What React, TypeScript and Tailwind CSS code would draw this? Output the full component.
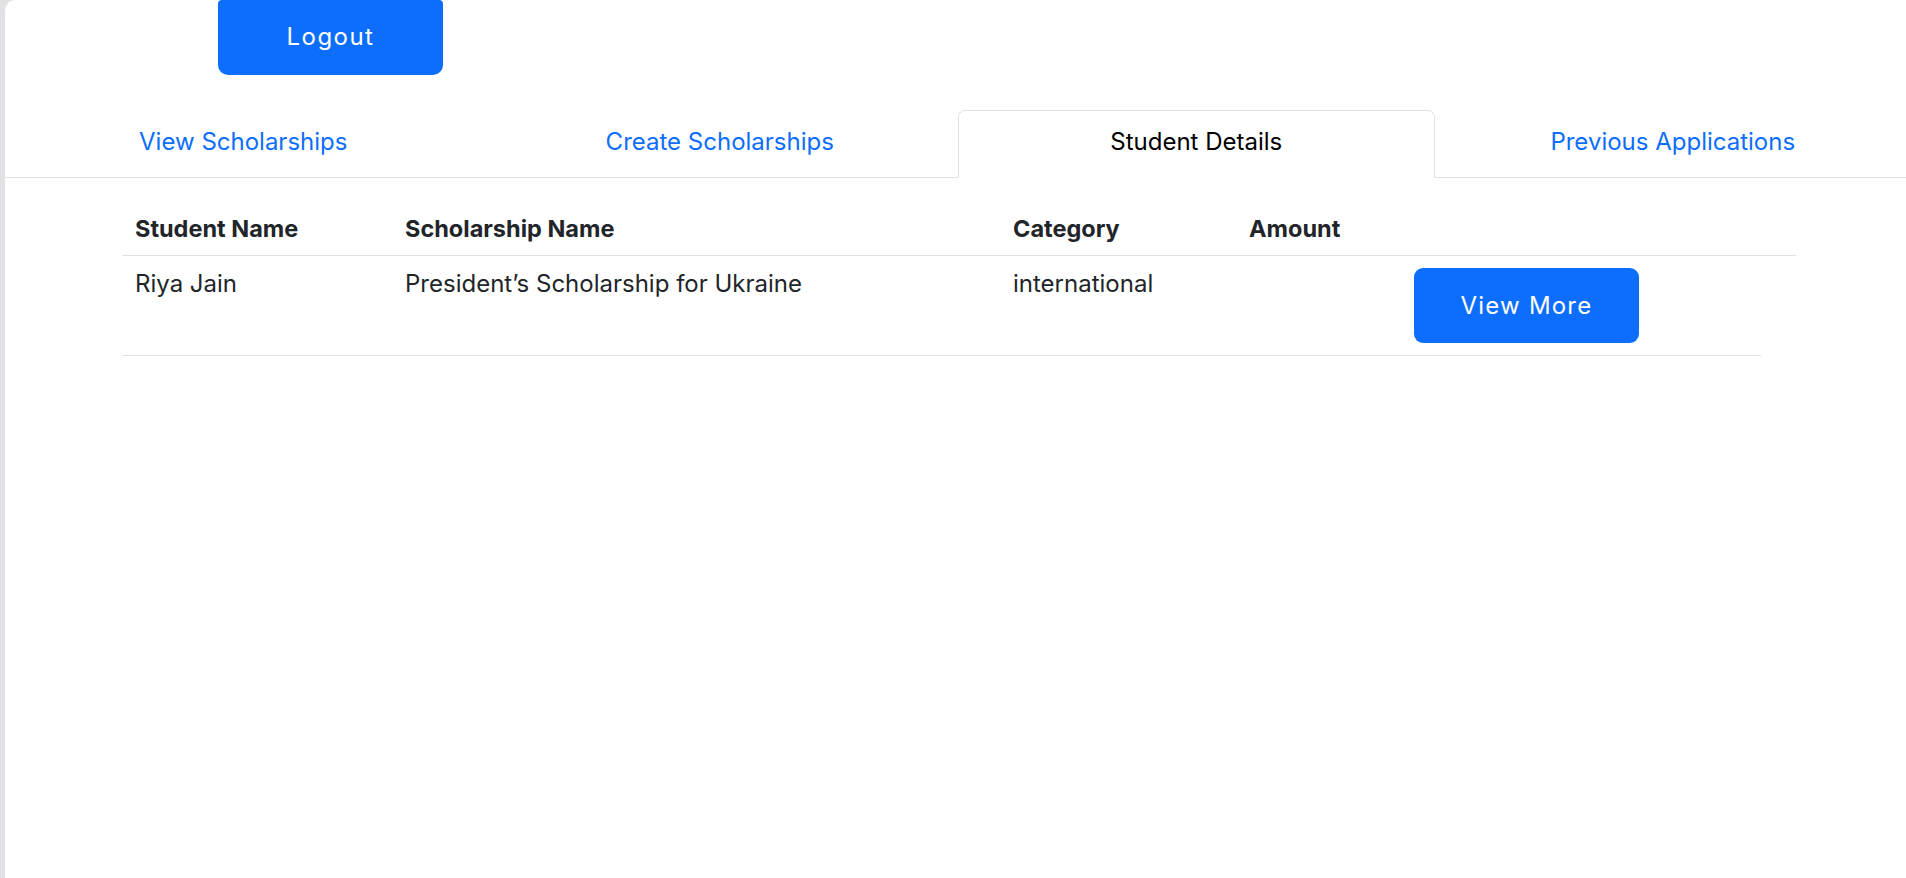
const tabs = [
  { label: "View Scholarships", active: false },
  { label: "Create Scholarships", active: false },
  { label: "Student Details", active: true },
  { label: "Previous Applications", active: false },
];

const rows = [
  {
    student: "Riya Jain",
    scholarship: "President’s Scholarship for Ukraine",
    category: "international",
    amount: "",
  },
];

export default function App() {
  return (
    <div className="flex min-h-screen overflow-hidden bg-[#dfe1e5] font-['Inter',sans-serif] text-[#212529]">
      <div className="w-[5px] shrink-0" />
      <div className="w-[1906px] shrink-0 min-h-[878px] bg-white rounded-tl-[10px]">
        <div className="pl-[213px]">
          <button className="w-[225px] h-[75px] pb-[2px] rounded-b-[10px] rounded-t-[4px] bg-[#0d6efd] text-white text-[24px] tracking-[0.06em]">
            Logout
          </button>
        </div>

        <nav className="mt-[35px] grid grid-cols-4 border-b border-[#dee2e6]">
          {tabs.map((tab) => (
            <div
              key={tab.label}
              className={
                tab.active
                  ? "-mb-px h-[68px] border border-[#dee2e6] border-b-white rounded-t-[7px] bg-white pt-[12px] pb-[16px] text-center text-[24px] leading-[38px] text-black"
                  : "-mb-px h-[68px] border border-transparent pt-[12px] pb-[16px] text-center text-[24px] leading-[38px] text-[#0d6efd]"
              }
            >
              {tab.label}
            </div>
          ))}
        </nav>

        <div className="mt-[25px] ml-[117px] text-[24px] leading-[36px]">
          <div className="grid w-[1674px] grid-cols-[270px_608px_236px_165px_1fr] border-b border-[#dee2e6] text-[23.5px] font-bold">
            <div className="px-[13px] py-[8px]">Student Name</div>
            <div className="px-[13px] py-[8px]">Scholarship Name</div>
            <div className="px-[13px] py-[8px]">Category</div>
            <div className="px-[13px] py-[8px]">Amount</div>
            <div className="px-[13px] py-[8px]" />
          </div>
          {rows.map((row) => (
            <div
              key={row.student}
              className="grid w-[1639px] grid-cols-[270px_608px_236px_165px_1fr] border-b border-[#dee2e6]"
            >
              <div className="px-[13px] pt-[10px]">{row.student}</div>
              <div className="px-[13px] pt-[10px]">{row.scholarship}</div>
              <div className="px-[13px] pt-[10px]">{row.category}</div>
              <div className="px-[13px] pt-[10px]">{row.amount}</div>
              <div className="px-[13px] py-[8px]">
                <button className="mt-[4px] mb-[4px] w-[225px] h-[75px] rounded-[9px] bg-[#0d6efd] text-white text-[24px] leading-[36px] tracking-[0.05em]">
                  View More
                </button>
              </div>
            </div>
          ))}
        </div>
      </div>
    </div>
  );
}
